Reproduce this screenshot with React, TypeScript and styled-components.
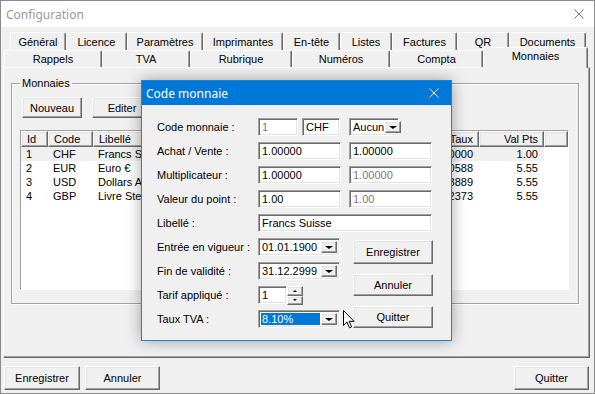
import styled, { createGlobalStyle, css } from "styled-components";

const GlobalStyle = createGlobalStyle`
  html, body { margin: 0; padding: 0; background: #ffffff; }
  body {
    font-family: "Liberation Sans", Arial, sans-serif;
    font-size: 11px;
    color: #000;
  }
  * { box-sizing: border-box; }
`;

const raised = css`
  border: 1px solid;
  border-color: #ffffff #696969 #696969 #ffffff;
  box-shadow: inset -1px -1px 0 #a0a0a0, inset 1px 1px 0 #e3e3e3;
  background: #f0f0f0;
`;

const sunken = css`
  border: 1px solid;
  border-color: #a0a0a0 #ffffff #ffffff #a0a0a0;
  box-shadow: inset 1px 1px 0 #696969, inset -1px -1px 0 #e3e3e3;
  background: #ffffff;
`;

const Window = styled.div`
  position: relative;
  width: 595px;
  height: 394px;
  border: 1px solid #8c8c8c;
  background: #f0f0f0;
  display: flex;
  flex-direction: column;
  overflow: hidden;
`;

const TitleBar = styled.div`
  height: 26px;
  flex: none;
  background: #ffffff;
  display: flex;
  align-items: center;
  justify-content: space-between;
  padding: 0 10px 0 5px;
  font-family: "Noto Sans", "Open Sans", sans-serif;
  font-size: 12px;
  color: #9a9a9a;
`;

const Body = styled.div`
  flex: 1;
  display: flex;
  flex-direction: column;
  padding: 5px 4px 3px 2px;
`;

const TabRow = styled.div<{ $indent: number; $h: number }>`
  display: flex;
  height: ${(p) => p.$h}px;
  padding-left: ${(p) => p.$indent}px;
`;

const Tab = styled.div<{ $w: number; $active?: boolean }>`
  width: ${(p) => p.$w}px;
  display: flex;
  align-items: center;
  justify-content: center;
  background: #f0f0f0;
  border-top: 1px solid #ffffff;
  border-left: 1px solid #ffffff;
  border-right: 1px solid #696969;
  box-shadow: inset -1px 0 0 #a0a0a0;
  border-radius: 2px 2px 0 0;
  white-space: nowrap;
  ${(p) =>
    p.$active &&
    css`
      position: relative;
      z-index: 1;
      margin-top: -3px;
      margin-bottom: -1px;
      align-items: flex-start;
      padding-top: 2px;
    `}
`;

const Panel = styled.div`
  height: 291px;
  flex: none;
  border: 1px solid;
  border-color: #ffffff #696969 #696969 #ffffff;
  box-shadow: inset -1px -1px 0 #a0a0a0;
  padding: 9px 10px 0 7px;
`;

const GroupBox = styled.fieldset`
  margin: 0;
  height: 227px;
  border: 1px solid #a0a0a0;
  box-shadow: 1px 1px 0 #ffffff, inset 1px 1px 0 #ffffff;
  padding: 7px 7px 0 8px;
`;

const GroupLegend = styled.legend`
  padding: 0 2px;
  background: #f0f0f0;
  line-height: 13px;
`;

const ToolRow = styled.div`
  display: flex;
  gap: 10px;
  padding-left: 2px;
`;

const Button = styled.div<{ $w: number; $h: number }>`
  ${raised};
  width: ${(p) => p.$w}px;
  height: ${(p) => p.$h}px;
  display: flex;
  align-items: center;
  justify-content: center;
  white-space: nowrap;
`;

const ListView = styled.div`
  margin-top: 12px;
  width: 549px;
  height: 160px;
  border: 1px solid;
  border-color: #a0a0a0 #ffffff #ffffff #a0a0a0;
  background: #ffffff;
  overflow: hidden;
`;

const ListHeader = styled.div`
  display: flex;
  height: 16px;
`;

const HeaderCell = styled.div<{ $w?: number; $right?: boolean }>`
  ${raised};
  ${(p) => (p.$w ? `width: ${p.$w}px; flex: none;` : "flex: 1;")}
  display: flex;
  align-items: center;
  justify-content: ${(p) => (p.$right ? "flex-end" : "flex-start")};
  padding: 0 5px;
  white-space: nowrap;
  overflow: hidden;
`;

const ListRow = styled.div<{ $selected?: boolean }>`
  display: flex;
  width: 523px;
  height: 14px;
  background: ${(p) => (p.$selected ? "#efefef" : "transparent")};
`;

const Cell = styled.div<{ $w: number; $right?: boolean }>`
  width: ${(p) => p.$w}px;
  flex: none;
  display: flex;
  align-items: center;
  justify-content: ${(p) => (p.$right ? "flex-end" : "flex-start")};
  padding: 0 ${(p) => (p.$right ? 6 : 5)}px 0 5px;
  white-space: nowrap;
  overflow: hidden;
`;

const Footer = styled.div`
  display: flex;
  gap: 5px;
  margin-top: 8px;
  padding: 0 1px;
  & > :last-child {
    margin-left: auto;
  }
`;

const Dialog = styled.div`
  position: absolute;
  left: 140px;
  top: 79px;
  width: 311px;
  height: 261px;
  border: 1px solid #1883d7;
  background: #f0f0f0;
  box-shadow: 0 0 14px rgba(0, 0, 0, 0.35);
  display: flex;
  flex-direction: column;
`;

const DialogTitle = styled.div`
  height: 24px;
  flex: none;
  background: #0078d7;
  color: #ffffff;
  display: flex;
  align-items: center;
  justify-content: space-between;
  padding: 0 12px 0 4px;
  font-family: "Noto Sans", "Open Sans", sans-serif;
  font-size: 12px;
`;

const Form = styled.div`
  display: grid;
  grid-template-columns: 101px 91px 84px;
  grid-auto-rows: 18px;
  row-gap: 6px;
  padding: 13px 0 0 15px;
`;

const Label = styled.div`
  display: flex;
  align-items: center;
  white-space: nowrap;
`;

const Pair = styled.div`
  display: flex;
  gap: 4px;
`;

const Field = styled.div<{ $w: number; $disabled?: boolean; $span?: boolean }>`
  ${sunken};
  width: ${(p) => p.$w}px;
  height: 18px;
  display: flex;
  align-items: center;
  padding-left: 3px;
  color: ${(p) => (p.$disabled ? "#7a7a7a" : "#000")};
  white-space: nowrap;
  ${(p) => p.$span && "grid-column: 2 / span 2;"}
`;

const Combo = styled.div<{ $w: number }>`
  ${sunken};
  width: ${(p) => p.$w}px;
  height: 18px;
  display: flex;
  align-items: stretch;
  padding: 2px;
`;

const ComboText = styled.div<{ $highlight?: boolean }>`
  flex: 1;
  display: flex;
  align-items: center;
  padding-left: 1px;
  margin-right: 1px;
  white-space: nowrap;
  background: ${(p) => (p.$highlight ? "#0078d7" : "transparent")};
  color: ${(p) => (p.$highlight ? "#ffffff" : "#000")};
`;

const DropButton = styled.div`
  ${raised};
  width: 16px;
  flex: none;
  display: flex;
  align-items: center;
  justify-content: center;
`;

const Arrow = styled.div<{ $up?: boolean; $size: number }>`
  width: 0;
  height: 0;
  border-left: ${(p) => p.$size}px solid transparent;
  border-right: ${(p) => p.$size}px solid transparent;
  ${(p) =>
    p.$up
      ? `border-bottom: ${Math.ceil(p.$size / 1.5)}px solid #000;`
      : `border-top: ${Math.ceil(p.$size / 1.5)}px solid #000;`}
`;

const SpinWrap = styled.div`
  display: flex;
  height: 19px;
`;

const Spin = styled.div`
  width: 16px;
  display: flex;
  flex-direction: column;
`;

const SpinButton = styled.div`
  ${raised};
  flex: 1;
  display: flex;
  align-items: center;
  justify-content: center;
`;

const ButtonStack = styled.div`
  grid-column: 3;
  grid-row: 6 / span 4;
  display: flex;
  flex-direction: column;
  gap: 10px;
  padding: 2px 0 0 4px;
`;

const Cursor = styled.svg`
  position: absolute;
  left: 341px;
  top: 308px;
`;

const backTabs: [string, number][] = [
  ["Général", 56],
  ["Licence", 61],
  ["Paramètres", 76],
  ["Imprimantes", 80],
  ["En-tête", 57],
  ["Listes", 52],
  ["Factures", 65],
  ["QR", 52],
  ["Documents", 77],
];

const frontTabs: [string, number][] = [
  ["Rappels", 98],
  ["TVA", 88],
  ["Rubrique", 102],
  ["Numéros", 98],
  ["Compta", 93],
  ["Monnaies", 105],
];

const columns = [
  { title: "Id", w: 27 },
  { title: "Code", w: 45 },
  { title: "Libellé", w: 310 },
  { title: "Taux", w: 76, right: true },
  { title: "Val Pts", w: 65, right: true },
];

const rows = [
  ["1", "CHF", "Francs Suisse", "1.00000", "1.00"],
  ["2", "EUR", "Euro  €", "1.10588", "5.55"],
  ["3", "USD", "Dollars Américains", "0.88889", "5.55"],
  ["4", "GBP", "Livre Sterling", "1.22373", "5.55"],
];

function CloseIcon({ color }: { color: string }) {
  return (
    <svg width="10" height="10" viewBox="0 0 10 10">
      <path d="M0.5 0.5 L9.5 9.5 M9.5 0.5 L0.5 9.5" stroke={color} strokeWidth="1" />
    </svg>
  );
}

function ComboBox({ w, value, highlight }: { w: number; value: string; highlight?: boolean }) {
  return (
    <Combo $w={w}>
      <ComboText $highlight={highlight}>{value}</ComboText>
      <DropButton>
        <Arrow $size={4} />
      </DropButton>
    </Combo>
  );
}

export default function App() {
  return (
    <>
      <GlobalStyle />
      <Window>
        <TitleBar>
          <span>Configuration</span>
          <CloseIcon color="#7a7a7a" />
        </TitleBar>
        <Body>
          <TabRow $indent={7} $h={18}>
            {backTabs.map(([t, w]) => (
              <Tab key={t} $w={w}>
                {t}
              </Tab>
            ))}
          </TabRow>
          <TabRow $indent={1} $h={17}>
            {frontTabs.map(([t, w]) => (
              <Tab key={t} $w={w} $active={t === "Monnaies"}>
                {t}
              </Tab>
            ))}
          </TabRow>
          <Panel>
            <GroupBox>
              <GroupLegend>Monnaies</GroupLegend>
              <ToolRow>
                <Button $w={60} $h={21}>Nouveau</Button>
                <Button $w={60} $h={21}>Editer</Button>
              </ToolRow>
              <ListView>
                <ListHeader>
                  {columns.map((c) => (
                    <HeaderCell key={c.title} $w={c.w} $right={c.right}>
                      {c.title}
                    </HeaderCell>
                  ))}
                  <HeaderCell />
                </ListHeader>
                {rows.map((r, i) => (
                  <ListRow key={r[0]} $selected={i === 0}>
                    {r.map((v, j) => (
                      <Cell key={j} $w={columns[j].w} $right={columns[j].right}>
                        {v}
                      </Cell>
                    ))}
                  </ListRow>
                ))}
              </ListView>
            </GroupBox>
          </Panel>
          <Footer>
            <Button $w={76} $h={24}>Enregistrer</Button>
            <Button $w={75} $h={24}>Annuler</Button>
            <Button $w={75} $h={24}>Quitter</Button>
          </Footer>
        </Body>

        <Dialog>
          <DialogTitle>
            <span>Code monnaie</span>
            <CloseIcon color="#ffffff" />
          </DialogTitle>
          <Form>
            <Label>Code monnaie :</Label>
            <Pair>
              <Field $w={40} $disabled>1</Field>
              <Field $w={38}>CHF</Field>
            </Pair>
            <ComboBox w={50} value="Aucun" />

            <Label>Achat / Vente :</Label>
            <Field $w={83}>1.00000</Field>
            <Field $w={83}>1.00000</Field>

            <Label>Multiplicateur :</Label>
            <Field $w={83}>1.00000</Field>
            <Field $w={83} $disabled>1.00000</Field>

            <Label>Valeur du point :</Label>
            <Field $w={83}>1.00</Field>
            <Field $w={83} $disabled>1.00</Field>

            <Label>Libellé :</Label>
            <Field $w={174} $span>Francs Suisse</Field>

            <Label>Entrée en vigueur :</Label>
            <ComboBox w={82} value="01.01.1900" />
            <ButtonStack>
              <Button $w={80} $h={24}>Enregistrer</Button>
              <Button $w={80} $h={23}>Annuler</Button>
              <Button $w={80} $h={22}>Quitter</Button>
            </ButtonStack>

            <Label>Fin de validité :</Label>
            <ComboBox w={82} value="31.12.2999" />

            <Label>Tarif appliqué :</Label>
            <SpinWrap>
              <Field $w={29}>1</Field>
              <Spin>
                <SpinButton>
                  <Arrow $up $size={2} />
                </SpinButton>
                <SpinButton>
                  <Arrow $size={2} />
                </SpinButton>
              </Spin>
            </SpinWrap>

            <Label>Taux TVA :</Label>
            <ComboBox w={82} value="8.10%" highlight />
          </Form>
        </Dialog>

        <Cursor width="13" height="21" viewBox="0 0 13 21">
          <path
            d="M1.5 1.5 L1.5 16.5 L5 13 L7.5 18.8 L9.6 17.9 L7.1 12.3 L12 12.3 Z"
            fill="#ffffff"
            stroke="#000000"
            strokeWidth="1"
          />
        </Cursor>
      </Window>
    </>
  );
}
